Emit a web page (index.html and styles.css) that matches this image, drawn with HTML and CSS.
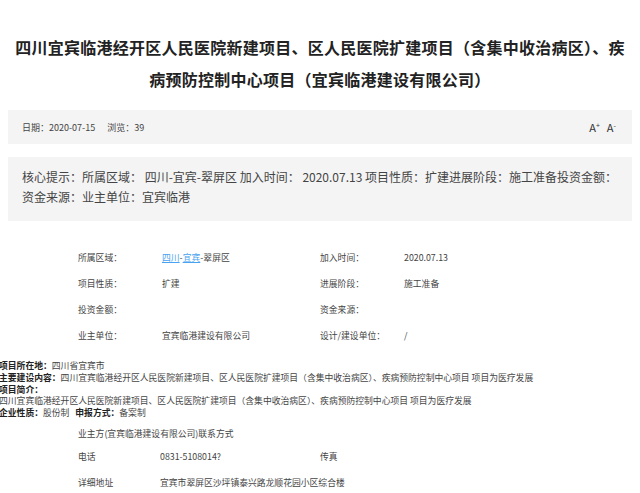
FILE: index.html
```html
<!DOCTYPE html>
<html lang="zh-CN">
<head>
<meta charset="utf-8">
<link rel="stylesheet" href="styles.css">
</head>
<body>
<div class="page">
  <h1 class="title">四川宜宾临港经开区人民医院新建项目、区人民医院扩建项目（含集中收治病区）、疾病预防控制中心项目（宜宾临港建设有限公司）</h1>
  <div class="meta">
    <div class="meta-left"><span>日期：2020-07-15</span><span class="views">浏览：39</span></div>
    <div class="meta-right"><span class="fs">A<sup>+</sup></span><span class="fs">A<sup>-</sup></span></div>
  </div>
  <div class="core">核心提示：所属区域： 四川-宜宾-翠屏区 加入时间： 2020.07.13 项目性质：扩建进展阶段：施工准备投资金额：资金来源：业主单位：宜宾临港</div>
  <div class="detail">
    <div>所属区域：</div><div><a class="lnk">四川</a>-<a class="lnk">宜宾</a>-翠屏区</div><div>加入时间：</div><div>2020.07.13</div>
    <div>项目性质：</div><div>扩建</div><div>进展阶段：</div><div>施工准备</div>
    <div>投资金额：</div><div></div><div>资金来源：</div><div></div>
    <div>业主单位：</div><div>宜宾临港建设有限公司</div><div>设计/建设单位：</div><div>/</div>
  </div>
  <div class="intro">
    <p><b>项目所在地：</b>四川省宜宾市</p>
    <p><b>主要建设内容：</b>四川宜宾临港经开区人民医院新建项目、区人民医院扩建项目（含集中收治病区）、疾病预防控制中心项目 项目为医疗发展</p>
    <p><b>项目简介：</b></p>
    <p>四川宜宾临港经开区人民医院新建项目、区人民医院扩建项目（含集中收治病区）、疾病预防控制中心项目 项目为医疗发展</p>
    <p><b>企业性质：</b>股份制 &nbsp; <b>申报方式：</b>备案制</p>
  </div>
  <div class="contact">
    <div class="contact-title">业主方(宜宾临港建设有限公司)联系方式</div>
    <div class="crow"><div>电话</div><div>0831-5108014?</div><div>传真</div><div></div></div>
    <div class="crow"><div>详细地址</div><div class="wide">宜宾市翠屏区沙坪镇泰兴路龙顺花园小区综合楼</div></div>
  </div>
</div>
</body>
</html>
```

FILE: styles.css
```css
* { box-sizing: border-box; }
html, body { margin: 0; padding: 0; background: #fff; }
body {
  font-family: "Noto Sans CJK SC", "Noto Sans", sans-serif;
  color: #333;
  overflow: hidden;
}
.page { padding: 0 8px; }
.title {
  margin: 31px 0 0;
  padding: 0;
  font-size: 16px;
  letter-spacing: 0.25px;
  line-height: 32px;
  font-weight: bold;
  color: #222;
  text-align: center;
}
.meta {
  margin-top: 15px;
  height: 34px;
  background: #f4f4f4;
  display: flex;
  align-items: center;
  justify-content: space-between;
  padding: 0 16px 0 14px;
  font-size: 9px;
  color: #444;
}
.views { margin-left: 12px; }
.meta-right { display: flex; gap: 7px; font-size: 11px; color: #333; }
.fs sup { font-size: 7px; vertical-align: 4px; }
.core {
  margin-top: 13px;
  height: 64px;
  background: #f4f4f4;
  padding: 10px 14px 0 14px;
  font-size: 12px;
  line-height: 20px;
  color: #444;
}
.detail {
  margin-top: 23px;
  padding-left: 70px;
  display: grid;
  grid-template-columns: 84px 158px 84px 1fr;
  grid-auto-rows: 26px;
  align-items: center;
  font-size: 8.8px;
  color: #444;
}
.lnk { color: #4aa3f0; text-decoration: underline; }
.intro {
  margin: 12px 0 0 -9px;
  font-size: 8.8px;
  line-height: 11.8px;
  color: #444;
}
.intro p { margin: 0; white-space: nowrap; }
.intro b { color: #222; }
.contact {
  margin-top: 5px;
  padding-left: 70px;
  font-size: 8.8px;
  color: #444;
}
.contact-title { height: 20px; line-height: 20px; }
.crow {
  display: grid;
  grid-template-columns: 82px 160px 84px 1fr;
  height: 26px;
  align-items: center;
}
.crow .wide { grid-column: 2 / 5; }
```
